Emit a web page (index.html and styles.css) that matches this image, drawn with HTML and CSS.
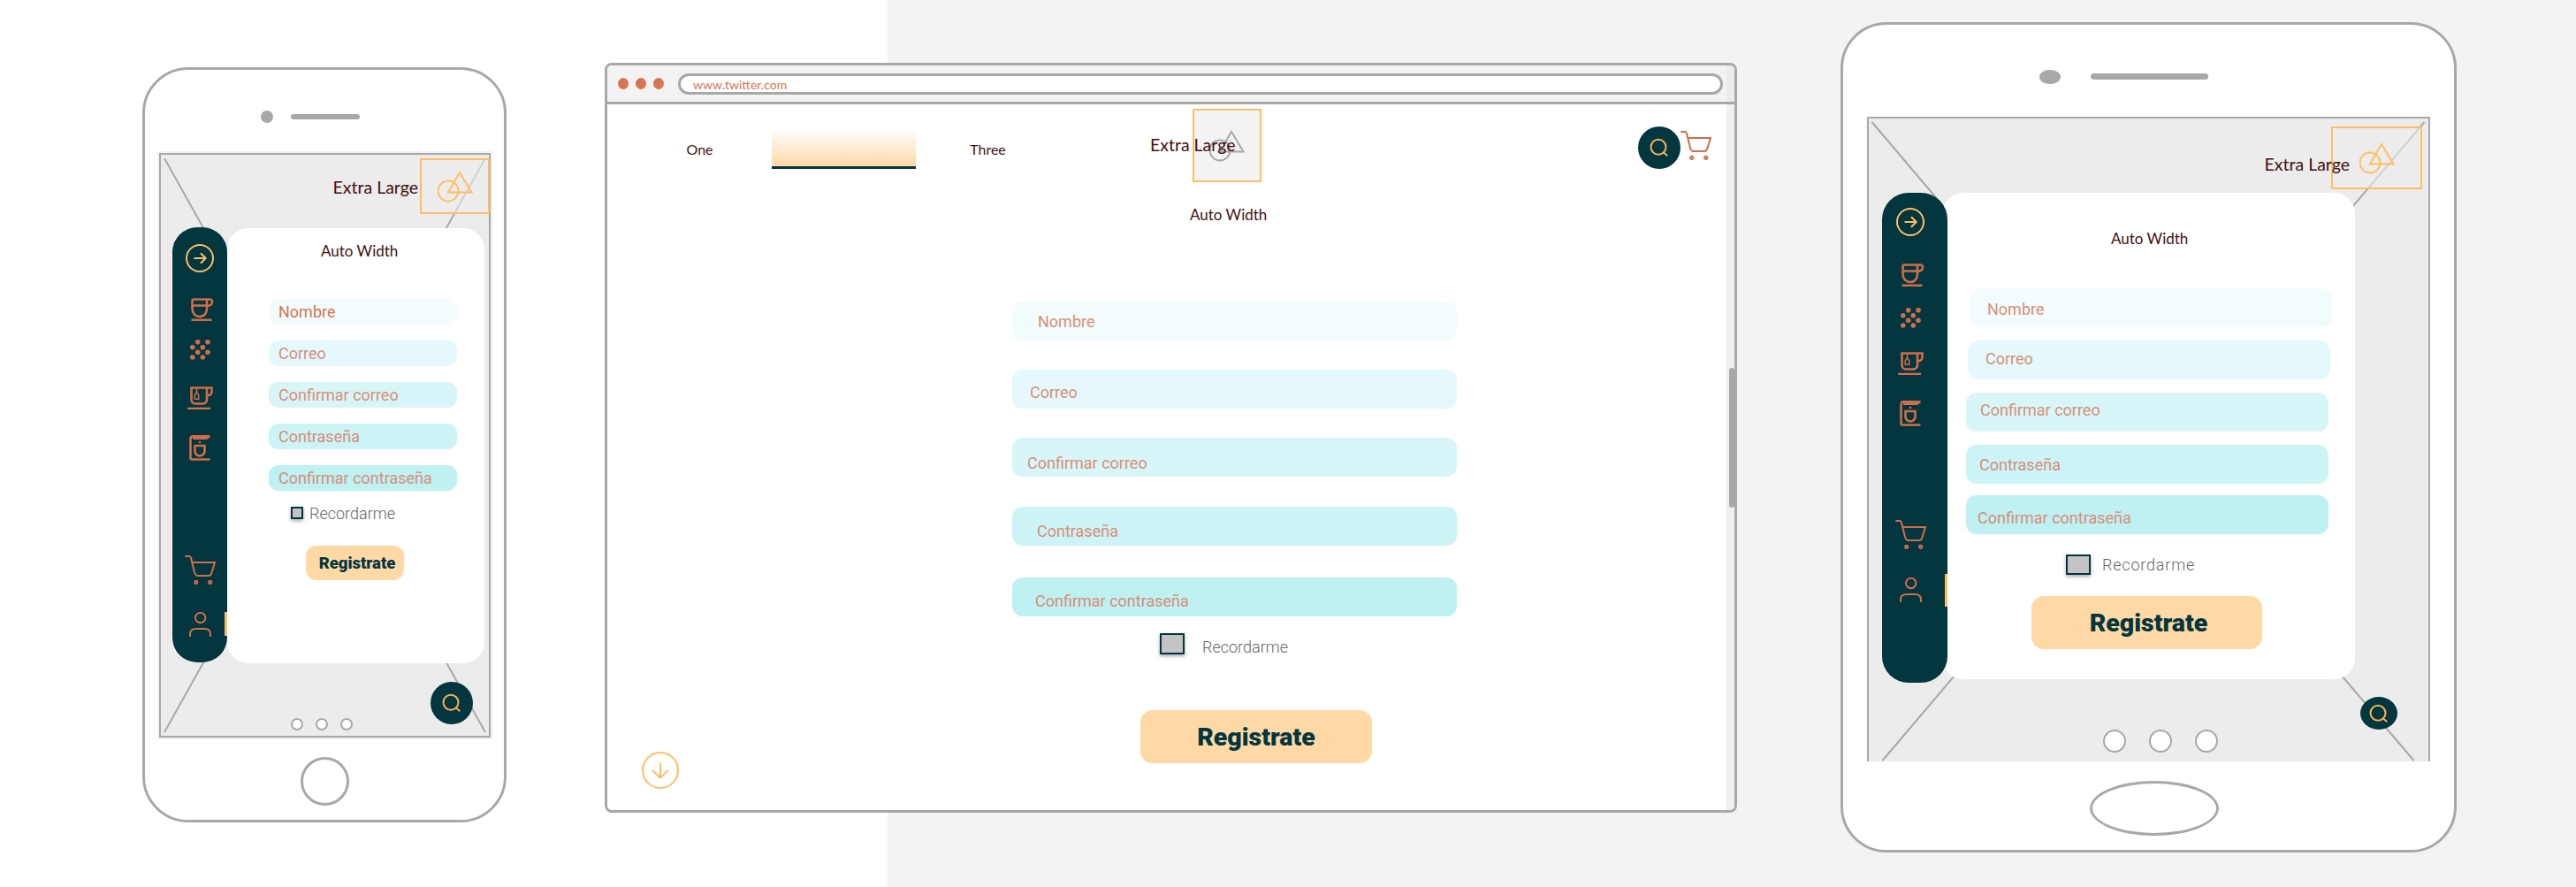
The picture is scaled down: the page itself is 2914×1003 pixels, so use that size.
FILE: index.html
```html
<!DOCTYPE html>
<html lang="en">
<head>
    <meta charset="UTF-8">
    <title>Registro wireframes</title>
    <link rel="stylesheet" href="styles.css">
</head>
<body>
    <!-- shared icons -->
    <svg class="defs">
        <symbol id="i-arrow" viewBox="0 0 32 32"><circle cx="16" cy="16" r="15"/><path d="M9.5 16H22.5M17 10.3L22.7 16L17 21.7"/></symbol>
        <symbol id="i-down" viewBox="0 0 42 42"><circle cx="21" cy="21" r="20"/><path d="M21 12.5V29.5M12.2 21L21 29.7L29.8 21"/></symbol>
        <symbol id="i-cup" viewBox="0 0 26 26"><path d="M1.5 1.5V12C1.5 17 5 21 10 21C15 21 18 17 18 12V1.5M1.5 8.5H18M1.5 1.5H21.5C25 1.5 25.5 8 19 8.7M.5 24.7H23.5"/></symbol>
        <symbol id="i-beans" viewBox="0 0 23 23"><g fill="currentColor" stroke="none"><circle cx="8.7" cy="2.8" r="2.8"/><circle cx="20" cy="2.8" r="2.8"/><circle cx="2.8" cy="8.7" r="2.8"/><circle cx="14.3" cy="8.7" r="2.8"/><circle cx="8.7" cy="14.3" r="2.8"/><circle cx="20" cy="14.3" r="2.8"/><circle cx="2.8" cy="20" r="2.8"/><circle cx="14.3" cy="20" r="2.8"/></g></symbol>
        <symbol id="i-tea" viewBox="0 0 29 26"><path d="M4.5 1.5H22V15A4.5 4.5 0 0 1 17.5 19.5H9A4.5 4.5 0 0 1 4.5 15ZM22 1.5H27.5V6A4 4 0 0 1 23.5 10H22"/><path class="thin" d="M8.3 9.5L10.5 6.5L12.7 9.5V14.3H8.3ZM10.5 1.5V6.5"/><path d="M0 25H26"/></symbol>
        <symbol id="i-machine" viewBox="0 0 24 29"><path fill="currentColor" stroke="none" d="M4 0H23.5V2.5L20 5H4Z"/><circle fill="currentColor" stroke="none" cx="12" cy="8" r="1.3"/><path d="M1.5 27.5V4A3 3 0 0 1 4.5 1H6M1.5 27.5H23.5M6.5 12H17.5V18A5.5 5.5 0 0 1 12 23.5A5.5 5.5 0 0 1 6.5 18Z"/></symbol>
        <symbol id="i-cart" viewBox="0 0 35 33"><path d="M.3 1H5.5Q6.5 1 7 3L11 19Q12 23 15 23H27Q29 23 30 21L34 8H9"/><circle cx="12.7" cy="30.3" r="1.6"/><circle cx="28.7" cy="30.3" r="1.6"/></symbol>
        <symbol id="i-user" viewBox="0 0 25 28"><circle cx="12.7" cy="6.5" r="5.7"/><path d="M1 28V25C1 20.5 4 19 8 19H17C21 19 24 20.5 24 25V28"/></symbol>
        <symbol id="i-search" viewBox="0 0 48 48"><circle cx="23" cy="23.3" r="8.5"/><path d="M29 29.5L33.3 33.3"/></symbol>
        <symbol id="i-shapes" viewBox="0 0 40 36"><circle cx="12" cy="23" r="11.5"/><path d="M25 2L38.5 24.5H12Z"/></symbol>
    </svg>

    <div class="stage">

        <!-- phone -->
        <div class="device phone">
            <div class="device-top"><span class="camera"></span><span class="speaker"></span></div>
            <div class="screen">
                <svg class="xlines" viewBox="0 0 371 657"><path d="M4 4L367 653M367 4L4 653"/></svg>
                <div class="screen-head">
                    <span class="xl">Extra Large</span>
                    <div class="shape-box"><svg class="shapes" width="40" height="36"><use href="#i-shapes"/></svg></div>
                </div>
                <div class="screen-body">
                    <div class="side">
                        <svg class="arrow" width="32" height="32"><use href="#i-arrow"/></svg>
                        <svg class="ico ico-cup" width="26" height="26"><use href="#i-cup"/></svg>
                        <svg class="ico" width="23" height="23"><use href="#i-beans"/></svg>
                        <svg class="ico" width="29" height="26"><use href="#i-tea"/></svg>
                        <svg class="ico" width="24" height="29"><use href="#i-machine"/></svg>
                        <svg class="ico line side-cart" width="35" height="33"><use href="#i-cart"/></svg>
                        <svg class="ico line side-user" width="25" height="28"><use href="#i-user"/></svg>
                        <span class="side-tab"></span>
                    </div>
                    <div class="card">
                        <div class="auto">Auto Width</div>
                        <form class="form">
                            <div class="field f1">Nombre</div>
                            <div class="field f2">Correo</div>
                            <div class="field f3">Confirmar correo</div>
                            <div class="field f4">Contraseña</div>
                            <div class="field f5">Confirmar contraseña</div>
                            <label class="remember"><span class="check"></span><span class="remember-text">Recordarme</span></label>
                            <div class="btn">Registrate</div>
                        </form>
                    </div>
                </div>
                <div class="dots"><span></span><span></span><span></span></div>
                <div class="fab"><svg width="48" height="48"><use href="#i-search"/></svg></div>
            </div>
            <div class="device-bottom"><span class="home"></span></div>
        </div>

        <!-- browser -->
        <div class="browser">
            <div class="bar">
                <span class="bar-dot"></span><span class="bar-dot"></span><span class="bar-dot"></span>
                <div class="url">www.twitter.com</div>
            </div>
            <div class="browser-row">
                <div class="page">
                    <div class="page-head">
                        <div class="tabs">
                            <div class="tab">One</div>
                            <div class="tab tab-on"></div>
                            <div class="tab">Three</div>
                        </div>
                        <span class="xl">Extra Large</span>
                        <div class="shape-box"><svg class="shapes" width="40" height="36"><use href="#i-shapes"/></svg></div>
                        <div class="fab"><svg width="48" height="48"><use href="#i-search"/></svg></div>
                        <svg class="ico line page-cart" width="35" height="33"><use href="#i-cart"/></svg>
                    </div>
                    <div class="auto">Auto Width</div>
                    <form class="form">
                        <div class="field f1">Nombre</div>
                        <div class="field f2">Correo</div>
                        <div class="field f3">Confirmar correo</div>
                        <div class="field f4">Contraseña</div>
                        <div class="field f5">Confirmar contraseña</div>
                        <label class="remember"><span class="check"></span><span class="remember-text">Recordarme</span></label>
                        <div class="btn">Registrate</div>
                    </form>
                    <svg class="down" width="42" height="42"><use href="#i-down"/></svg>
                </div>
                <div class="track"><span class="thumb"></span></div>
            </div>
        </div>

        <!-- tablet -->
        <div class="device tablet">
            <div class="device-top"><span class="camera"></span><span class="speaker"></span></div>
            <div class="screen">
                <svg class="xlines" viewBox="0 0 633 727"><path d="M3.5 4L616.5 726M628.5 4L15.5 726"/></svg>
                <div class="screen-head">
                    <span class="xl">Extra Large</span>
                    <div class="shape-box"><svg class="shapes" width="40" height="36"><use href="#i-shapes"/></svg></div>
                </div>
                <div class="screen-body">
                    <div class="side">
                        <svg class="arrow" width="32" height="32"><use href="#i-arrow"/></svg>
                        <svg class="ico ico-cup" width="26" height="26"><use href="#i-cup"/></svg>
                        <svg class="ico" width="23" height="23"><use href="#i-beans"/></svg>
                        <svg class="ico" width="29" height="26"><use href="#i-tea"/></svg>
                        <svg class="ico" width="24" height="29"><use href="#i-machine"/></svg>
                        <svg class="ico line side-cart" width="35" height="33"><use href="#i-cart"/></svg>
                        <svg class="ico line side-user" width="25" height="28"><use href="#i-user"/></svg>
                        <span class="side-tab"></span>
                    </div>
                    <div class="card">
                        <div class="auto">Auto Width</div>
                        <form class="form">
                            <div class="field f1">Nombre</div>
                            <div class="field f2">Correo</div>
                            <div class="field f3">Confirmar correo</div>
                            <div class="field f4">Contraseña</div>
                            <div class="field f5">Confirmar contraseña</div>
                            <label class="remember"><span class="check"></span><span class="remember-text">Recordarme</span></label>
                            <div class="btn">Registrate</div>
                        </form>
                    </div>
                </div>
                <div class="dots"><span></span><span></span><span></span></div>
                <div class="fab"><svg width="48" height="48"><use href="#i-search"/></svg></div>
            </div>
            <div class="device-bottom"><span class="home"></span></div>
        </div>

    </div>
</body>
</html>
```

FILE: styles.css
```css
* {
    box-sizing: border-box;
}
body {
    margin: 0;
    height: 1003px;
    overflow: hidden;
    font-family: Roboto, sans-serif;
    background: linear-gradient(90deg, #fff 1004px, #f3f3f3 1004px);
}
.defs {
    position: absolute;
    width: 0;
    height: 0;
}
.stage {
    display: flex;
    align-items: flex-start;
    padding-left: 161px;
}

/* devices */
.device {
    display: flex;
    flex-direction: column;
    background: #fff;
    border: 3px solid #a8a8a8;
    border-radius: 52px;
}
.phone {
    width: 412px;
    height: 854px;
    margin-top: 76px;
}
.tablet {
    width: 697px;
    height: 939px;
    margin-top: 25px;
    margin-left: 117px;
}
.device-top {
    display: flex;
    align-items: flex-start;
}
.phone .device-top {
    height: 94px;
    padding: 46px 0 0 131px;
    gap: 20px;
}
.tablet .device-top {
    height: 104px;
    padding: 51px 0 0 222px;
    gap: 34px;
}
.camera {
    background: #a8a8a8;
    border-radius: 50%;
}
.speaker {
    background: #a8a8a8;
    border-radius: 4px;
}
.phone .camera {
    width: 14px;
    height: 14px;
}
.phone .speaker {
    width: 78px;
    height: 6px;
    margin-top: 4px;
}
.tablet .camera {
    width: 24px;
    height: 16px;
}
.tablet .speaker {
    width: 133px;
    height: 7px;
    margin-top: 4px;
}
.device-bottom {
    flex: 1;
    display: flex;
    align-items: center;
    justify-content: center;
    padding-top: 5px;
}
.tablet .device-bottom {
    padding-left: 12px;
}
.home {
    border: 3px solid #a8a8a8;
    border-radius: 50%;
}
.phone .home {
    width: 55px;
    height: 55px;
}
.tablet .home {
    width: 146px;
    height: 62px;
}

/* screen */
.screen {
    position: relative;
    background: #ececec;
    border: 2px solid #a8a8a8;
}
.phone .screen {
    width: 375px;
    height: 661px;
    margin-left: 16px;
    box-shadow: 0 0 0 2px #f2f2f2;
}
.tablet .screen {
    width: 637px;
    height: 729px;
    margin-left: 27px;
    border-bottom: none;
}
.xlines {
    position: absolute;
    top: 0;
    left: 0;
    width: 100%;
    height: 100%;
}
.xlines path {
    fill: none;
    stroke: #a8a8a8;
    stroke-width: 2;
}
.screen-head {
    position: relative;
    display: flex;
    justify-content: flex-end;
    align-items: flex-start;
}
.phone .screen-head {
    height: 82px;
    padding-top: 4px;
    margin-right: -1px;
}
.tablet .screen-head {
    height: 84px;
    padding: 9px 7px 0 0;
}
.xl {
    position: relative;
    z-index: 1;
    font-family: Lato, sans-serif;
    font-size: 19.5px;
    line-height: 22px;
    color: #450f0f;
    white-space: nowrap;
}
.phone .xl {
    margin: 22px 2px 0 0;
}
.tablet .xl {
    margin: 32px -21px 0 0;
}
.browser .xl {
    margin: 30px -48px 0 102px;
}
.shape-box {
    display: flex;
    align-items: center;
    justify-content: center;
    border: 2px solid #ffbe64;
    color: #ffbe64;
    background: rgba(236, 236, 236, .6);
}
.shapes {
    fill: none;
    stroke: currentColor;
    stroke-width: 2;
}
.phone .shape-box {
    width: 79px;
    height: 63px;
}
.tablet .shape-box {
    width: 103px;
    height: 71px;
}
.browser .shape-box {
    width: 78px;
    height: 83px;
    color: #a8a8a8;
    border-color: #ffbe64;
    background: #f3f3f3;
}
.screen-body {
    position: relative;
    display: flex;
    align-items: flex-start;
}
.phone .screen-body {
    padding-left: 13px;
}
.tablet .screen-body {
    padding-left: 15px;
}

/* sidebar */
.side {
    position: relative;
    z-index: 2;
    display: grid;
    justify-items: center;
    align-items: center;
    background: #03363f;
}
.phone .side {
    width: 62px;
    height: 492px;
    border-radius: 28px;
    grid-template-rows: 70px 46px 45px 64px 49px 86px 54px 70px 1fr;
}
.tablet .side {
    width: 74px;
    height: 554px;
    padding-right: 10px;
    border-radius: 30px;
    grid-template-rows: 66px 53px 45px 58px 55px 82px 55px 70px 1fr;
}
.arrow {
    fill: none;
    stroke: #ffbe64;
    stroke-width: 2;
}
.ico {
    color: #cf6e4a;
    fill: none;
    stroke: #cf6e4a;
    stroke-width: 2.6;
}
.thin {
    stroke-width: 1.5;
}
.ico.line {
    stroke-width: 2;
}
.ico-cup {
    margin-left: 6px;
}
.side-cart {
    grid-row: 7;
}
.side-user {
    grid-row: 8;
}
.side-tab {
    position: absolute;
    right: 0;
    width: 3px;
    background: #ffbe64;
}
.phone .side-tab {
    top: 435px;
    height: 27px;
}
.tablet .side-tab {
    top: 431px;
    height: 37px;
}

/* card and form */
.card {
    background: #fff;
    border-radius: 24px;
}
.phone .card {
    width: 291px;
    height: 492px;
    margin-top: 1px;
    padding: 16px 0 0 47px;
}
.tablet .card {
    width: 467px;
    height: 550px;
    margin-left: -6px;
    padding: 42px 0 0 27px;
}
.auto {
    font-family: Lato, sans-serif;
    font-size: 17px;
    line-height: 20px;
    color: #450f0f;
    white-space: nowrap;
}
.phone .auto {
    margin: 0 0 44px 59px;
}
.tablet .auto {
    margin: 0 0 46px 164px;
}
.browser .auto {
    margin: 27px 0 88px 659px;
}
.form {
    display: flex;
    flex-direction: column;
    align-items: flex-start;
}
.phone .form {
    gap: 18px;
}
.tablet .form {
    gap: 15px;
}
.browser .form {
    gap: 33px;
    margin-left: 458px;
}
.field {
    display: flex;
    align-items: center;
    font-size: 18px;
    color: #d78f77;
    white-space: nowrap;
}
.f1 { background: #f3fcfd; }
.f2 { background: #e5f9fc; }
.f3 { background: #d8f6f7; }
.f4 { background: #ccf3f6; }
.f5 { background: #bff0f2; }

.phone .field {
    width: 213px;
    height: 29px;
    padding-left: 11px;
    border-radius: 11px;
}
.phone .f1 {
    color: #d87452;
}
.browser .field {
    width: 503px;
    height: 44px;
    border-radius: 12px;
}
.browser .f1 { padding-left: 29px; }
.browser .f2 { padding: 6px 0 0 20px; }
.browser .f3 { padding: 12px 0 0 17px; }
.browser .f4 { padding: 10px 0 0 28px; margin-top: 1px; }
.browser .f5 { padding: 8px 0 0 26px; margin-top: 3px; }
.tablet .field {
    width: 410px;
    height: 44px;
    border-radius: 12px;
}
.tablet .f1 { margin-left: 4px; padding: 2px 0 0 20px; }
.tablet .f2 { margin-left: 2px; padding: 0 0 4px 20px; }
.tablet .f3 { padding: 0 0 6px 16px; }
.tablet .f4 { padding-left: 15px; }
.tablet .f5 { padding: 6px 0 0 13px; margin-top: -2px; }

.remember {
    display: flex;
    align-items: center;
}
.check {
    flex: none;
    border: 2px solid #03363f;
    background: #c4c4c4;
    box-shadow: 0 2px 4px rgba(0, 0, 0, .35);
}
.remember-text {
    font-size: 18px;
    font-weight: 300;
    color: #666;
}
.phone .remember {
    height: 14px;
    margin-left: 25px;
    gap: 7px;
}
.phone .check {
    width: 14px;
    height: 14px;
}
.browser .remember {
    height: 24px;
    margin: -14px 0 0 167px;
    gap: 20px;
}
.browser .check {
    width: 28px;
    height: 24px;
}
.browser .remember-text {
    padding-top: 6px;
}
.tablet .remember {
    height: 23px;
    margin: 8px 0 0 113px;
    gap: 13px;
}
.tablet .check {
    width: 28px;
    height: 23px;
}
.tablet .remember-text {
    letter-spacing: .8px;
}
.btn {
    display: flex;
    align-items: center;
    justify-content: center;
    background: #fed9a6;
    color: #03363f;
    font-weight: 900;
    white-space: nowrap;
}
.phone .btn {
    width: 111px;
    height: 39px;
    margin: 12px 0 0 42px;
    padding-left: 5px;
    border-radius: 12px;
    font-size: 18.5px;
}
.browser .btn {
    width: 262px;
    height: 60px;
    margin: 30px 0 0 145px;
    border-radius: 14px;
    font-size: 28.5px;
}
.tablet .btn {
    width: 261px;
    height: 60px;
    margin: 9px 0 0 74px;
    padding-left: 4px;
    border-radius: 14px;
    font-size: 28.5px;
}

/* dots and search button */
.dots {
    position: relative;
    display: flex;
}
.dots span {
    background: #fff;
    border: 2px solid #a8a8a8;
    border-radius: 50%;
}
.phone .dots {
    gap: 14px;
    margin: 62px 0 0 147px;
}
.phone .dots span {
    width: 14px;
    height: 14px;
}
.tablet .dots {
    gap: 26px;
    margin: 53px 0 0 265px;
}
.tablet .dots span {
    width: 26px;
    height: 26px;
}
.fab {
    display: flex;
    align-items: center;
    justify-content: center;
    width: 48px;
    height: 48px;
    background: #03363f;
    border-radius: 50%;
    fill: none;
    stroke: #f7b04f;
    stroke-width: 2;
}
.fab svg {
    flex: none;
}
.phone .fab {
    position: absolute;
    right: 18px;
    bottom: 13px;
}
.tablet .fab {
    position: absolute;
    right: 35px;
    bottom: 36px;
    width: 42px;
    height: 37px;
}
.browser .fab {
    flex: none;
    margin: 20px 0 0 426px;
}

/* browser */
.browser {
    width: 1281px;
    height: 848px;
    margin-top: 71px;
    margin-left: 111px;
    background: #fff;
    border: 3px solid #a8a8a8;
    border-radius: 8px;
    overflow: hidden;
}
.bar {
    display: flex;
    align-items: center;
    gap: 8px;
    height: 44px;
    padding: 0 0 0 12px;
    background: linear-gradient(90deg, #f3f3f3 1266px, #ececec 1266px);
    border-bottom: 3px solid #a8a8a8;
}
.bar-dot {
    width: 12px;
    height: 13px;
    background: #d87452;
    border-radius: 50%;
}
.url {
    width: 1182px;
    height: 24px;
    margin-left: 8px;
    padding-left: 14px;
    background: #fff;
    border: 3px solid #a8a8a8;
    border-radius: 12px;
    font-family: Lato, sans-serif;
    font-size: 14px;
    line-height: 19px;
    color: #d87452;
}
.browser-row {
    display: flex;
    height: 798px;
}
.page {
    position: relative;
    width: 1266px;
}
.page-head {
    display: flex;
    align-items: flex-start;
    padding-top: 5px;
}
.tabs {
    display: flex;
    margin: 22px 0 0 23px;
}
.tab {
    display: flex;
    align-items: center;
    justify-content: center;
    width: 163px;
    height: 46px;
    font-family: Lato, sans-serif;
    font-size: 16px;
    color: #450f0f;
}
.tab-on {
    background: linear-gradient(#fff, #fed9a6);
    border-bottom: 3px solid #03363f;
}
.page-cart {
    flex: none;
    margin-top: 25px;
}
.down {
    position: absolute;
    left: 39px;
    bottom: 24px;
    fill: none;
    stroke: #ffbe64;
    stroke-width: 2;
}
.track {
    width: 9px;
    background: #f0f0f0;
}
.thumb {
    display: block;
    width: 6px;
    height: 158px;
    margin: 298px 0 0 3px;
    background: #a8a8a8;
    border-radius: 4px;
}
```
